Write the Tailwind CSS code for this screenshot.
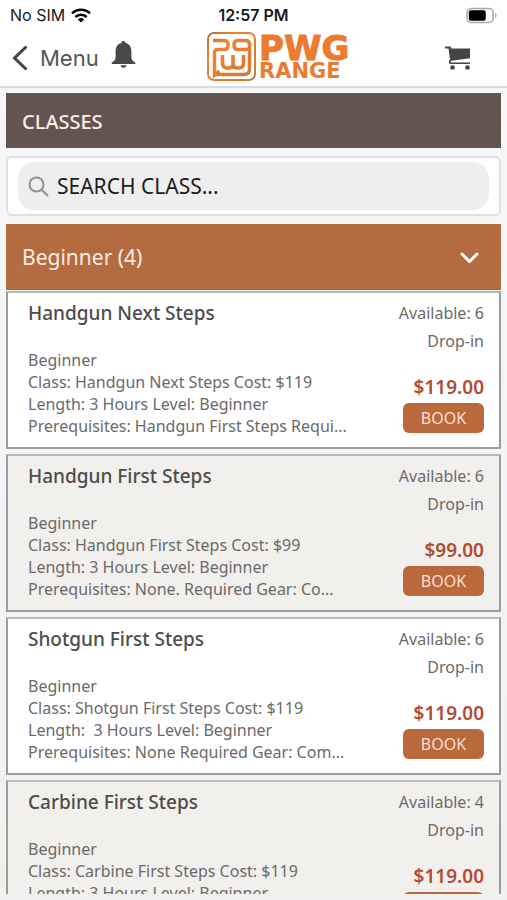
<!DOCTYPE html>
<html lang="en">
<head>
<meta charset="utf-8">
<meta name="viewport" content="width=device-width, initial-scale=1">
<title>PWG Range – Classes</title>
<script src="https://cdn.jsdelivr.net/npm/@tailwindcss/browser@4"></script>
</head>
<body class="flex h-screen flex-col overflow-hidden bg-linear-to-b from-[#f7f7f6] via-[#f3f4f7] to-[#f0f0ee] font-['Noto_Sans','Open_Sans',sans-serif] text-[#6a6a6a]">

<header class="shrink-0 border-b-2 border-[#dadcdf] bg-white">
  <div class="grid h-[30px] grid-cols-[1fr_auto_1fr] items-center px-[10px] font-[Inter,'Liberation_Sans',sans-serif] text-base text-[#1a1a1a]">
    <div class="flex items-center gap-[6px]">
      <span>No SIM</span>
      <svg class="h-[15px] w-5" viewBox="0 0 20 15" fill="none" stroke="#000" stroke-width="2.6" aria-label="Wi-Fi"><path d="M1 5.4a13 13 0 0 1 18 0M4.4 9a8 8 0 0 1 11.2 0"/><path d="M10 14.5 6.8 11.4a4.6 4.6 0 0 1 6.4 0Z" fill="#000" stroke="none"/></svg>
    </div>
    <span class="font-semibold">12:57 PM</span>
    <svg class="h-[17px] w-[31px] justify-self-end" viewBox="0 0 33 17" aria-label="Battery"><rect x="1" y="1" width="28" height="15" rx="4.5" fill="#fff" stroke="#aaa" stroke-width="1.6"/><rect x="3" y="3" width="18" height="11" rx="2" fill="#000"/><path d="M31 5.5c2 1 2 5 0 6Z" fill="#aaa"/></svg>
  </div>
  <div class="grid h-14 grid-cols-[3fr_auto_2fr] items-center px-3">
    <div class="flex items-center gap-3">
      <button class="flex items-center gap-3 font-[Inter,'Liberation_Sans',sans-serif] text-[22px] text-[#555]">
        <svg class="h-[26px] w-4" viewBox="0 0 16 26" fill="none" stroke="#444" stroke-width="3"><path d="M14.500 1.500 2.500 13l12 11.500"/></svg>
        <span>Menu</span>
      </button>
      <button aria-label="Notifications" class="pb-2">
        <svg class="h-[27px] w-[25px]" viewBox="0 0 26 28" fill="#484848"><path d="M13 0a2.4 2.4 0 0 0-2.300 2C6.500 3 4.800 6.500 4.800 11v5.500c0 3-1.800 4.500-4 5.900V24h24.400v-1.600c-2.200-1.400-4-2.900-4-5.900V11c0-4.500-1.700-8-5.900-9A2.400 2.400 0 0 0 13 0ZM10 25.300h6a3 2.500 0 0 1-6 0Z"/></svg>
      </button>
    </div>
    <svg class="h-[52px] w-[160px] overflow-visible" viewBox="0 0 160 52" role="img" aria-label="PWG Range">
      <defs><linearGradient id="rust" gradientUnits="userSpaceOnUse" x1="0" y1="0" x2="48" y2="50"><stop offset="0" stop-color="#b86d36"/><stop offset=".3" stop-color="#ef8336"/><stop offset=".7" stop-color="#e47a2e"/><stop offset="1" stop-color="#b98343"/></linearGradient></defs>
      <g fill="none" stroke="url(#rust)">
        <rect x="2" y="1" width="47" height="47" rx="6" stroke-width="2"/>
        <path stroke-width="3.500" d="M7 8.500h11q4 0 4 4v1q0 4-4 4h-6.500q-3 0-3 3V43l5-4M43.500 17.500H32q-4 0-4-4v-1q0-4 4-4h7.500q4 0 4 4V37q0 5.500-5.500 5.500H9"/>
        <path stroke-width="3.500" d="M16.500 23v8q0 5 5 5h1q4.500 0 4.500-5v-8M27 31q0 5 4.500 5h1q5 0 5-5v-8"/>
      </g>
      <g fill="#ec7a31" font-family="'DejaVu Sans',sans-serif" font-weight="700">
        <text x="53" y="28" font-size="34" stroke="#ec7a31" stroke-width="1">PWG</text>
        <text x="53" y="46" font-size="21">RANGE</text>
      </g>
    </svg>
    <button aria-label="Cart" class="mr-6 justify-self-end">
      <svg class="h-6 w-[26px]" viewBox="0 0 26 24" fill="#444"><path d="M0 .5h5.500l1 2H25v9.700L6.500 14.800q-1.200.7-.7 1.700H25V18H6q-2.800-.300-2-2.700l1-2L3.500 2.500H0Z"/><circle cx="7.500" cy="21.500" r="2.300"/><circle cx="22.500" cy="21.500" r="2.300"/></svg>
    </button>
  </div>
</header>

<main class="mx-[6px] mt-[5px] mb-[6px] min-h-0 flex-1 overflow-hidden">
  <h1 class="flex h-[55px] items-center bg-[#645450] px-4 pt-[2px] text-xl font-medium text-[#fbeeea]">CLASSES</h1>

  <form class="mt-2 rounded-md border-2 border-[#e0e0e0] bg-white px-[10px] py-1" role="search">
    <label class="flex h-12 items-center gap-2 rounded-2xl bg-[#eee] px-[10px]">
      <svg class="size-[21px] shrink-0" viewBox="0 0 21 21" fill="none" stroke="#929292" stroke-width="2"><circle cx="8.500" cy="8.500" r="7"/><path d="m13.500 13.500 6.500 6.500"/></svg>
      <input type="search" aria-label="Search class" placeholder="SEARCH CLASS..." class="min-w-0 flex-1 bg-transparent pt-[2px] text-[21px] text-[#1c1c1c] outline-none placeholder:text-[#1c1c1c]">
    </label>
  </form>

  <section>
    <h2 class="mt-2">
      <button aria-expanded="true" class="flex h-[66px] w-full items-center justify-between bg-[#b56b40] pt-[2px] pr-[22px] pl-4 text-[21px] text-[#fdeee4]">
        <span>Beginner (4)</span>
        <svg class="h-3 w-[19px]" viewBox="0 0 19 12" fill="none" stroke="#fff" stroke-width="3" stroke-linecap="round" stroke-linejoin="round"><path d="m2 2 7.500 7.500L17 2"/></svg>
      </button>
    </h2>
    <ul class="mt-px flex flex-col gap-[5px]">
      <li class="flex h-[158px] justify-between border-2 border-t-[#bbb] border-[#9c9c9c] bg-white pt-[6px] pr-[15px] pl-5">
        <div class="min-w-0">
          <h3 class="text-[19px] leading-7 font-medium text-[#4c4c4c]">Handgun Next Steps</h3>
          <p class="mt-[22px] text-base leading-[22px] whitespace-pre">Beginner
Class: Handgun Next Steps Cost: $119
Length: 3 Hours Level: Beginner
Prerequisites: Handgun First Steps Requi...</p>
        </div>
        <div class="flex shrink-0 flex-col items-end text-base leading-7">
          <span>Available: 6</span>
          <span>Drop-in</span>
          <strong class="mt-[18px] text-[19px] font-semibold text-[#b34a33]">$119.00</strong>
          <button class="mt-[2px] h-[30px] w-[81px] rounded-md bg-[#b9693b] text-base text-[#f9dfcf]">BOOK</button>
        </div>
      </li>
      <li class="flex h-[158px] justify-between border-2 border-t-[#bbb] border-[#9c9c9c] bg-[#f2f0ed] pt-[6px] pr-[15px] pl-5">
        <div class="min-w-0">
          <h3 class="text-[19px] leading-7 font-medium text-[#4c4c4c]">Handgun First Steps</h3>
          <p class="mt-[22px] text-base leading-[22px] whitespace-pre">Beginner
Class: Handgun First Steps Cost: $99
Length: 3 Hours Level: Beginner
Prerequisites: None. Required Gear: Co...</p>
        </div>
        <div class="flex shrink-0 flex-col items-end text-base leading-7">
          <span>Available: 6</span>
          <span>Drop-in</span>
          <strong class="mt-[18px] text-[19px] font-semibold text-[#b34a33]">$99.00</strong>
          <button class="mt-[2px] h-[30px] w-[81px] rounded-md bg-[#b9693b] text-base text-[#f9dfcf]">BOOK</button>
        </div>
      </li>
      <li class="flex h-[158px] justify-between border-2 border-t-[#bbb] border-[#9c9c9c] bg-white pt-[6px] pr-[15px] pl-5">
        <div class="min-w-0">
          <h3 class="text-[19px] leading-7 font-medium text-[#4c4c4c]">Shotgun First Steps</h3>
          <p class="mt-[22px] text-base leading-[22px] whitespace-pre">Beginner
Class: Shotgun First Steps Cost: $119
Length:  3 Hours Level: Beginner
Prerequisites: None Required Gear: Com...</p>
        </div>
        <div class="flex shrink-0 flex-col items-end text-base leading-7">
          <span>Available: 6</span>
          <span>Drop-in</span>
          <strong class="mt-[18px] text-[19px] font-semibold text-[#b34a33]">$119.00</strong>
          <button class="mt-[2px] h-[30px] w-[81px] rounded-md bg-[#b9693b] text-base text-[#f9dfcf]">BOOK</button>
        </div>
      </li>
      <li class="flex h-[158px] justify-between border-2 border-t-[#bbb] border-[#9c9c9c] bg-[#f2f0ed] pt-[6px] pr-[15px] pl-5">
        <div class="min-w-0">
          <h3 class="text-[19px] leading-7 font-medium text-[#4c4c4c]">Carbine First Steps</h3>
          <p class="mt-[22px] text-base leading-[22px] whitespace-pre">Beginner
Class: Carbine First Steps Cost: $119
Length: 3 Hours Level: Beginner</p>
        </div>
        <div class="flex shrink-0 flex-col items-end text-base leading-7">
          <span>Available: 4</span>
          <span>Drop-in</span>
          <strong class="mt-[18px] text-[19px] font-semibold text-[#b34a33]">$119.00</strong>
          <button class="mt-[2px] h-[30px] w-[81px] rounded-md bg-[#b9693b] text-base text-[#f9dfcf]">BOOK</button>
        </div>
      </li>
    </ul>
  </section>
</main>
</body>
</html>
